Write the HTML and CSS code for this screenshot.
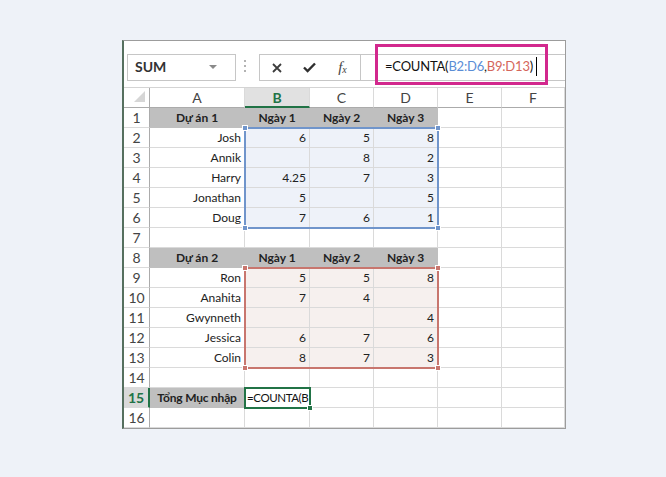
FILE: index.html
```html
<!DOCTYPE html>
<html lang="vi">
<head>
    <meta charset="UTF-8">
    <meta name="viewport" content="width=device-width, initial-scale=1.0">
    <title>COUNTA</title>
    <link rel="stylesheet" href="styles.css">
</head>
<body>
    <div class="window">
        <div class="formula-bar">
            <div class="name-box">SUM<span class="arrow"></span></div>
            <div class="grip"></div>
            <div class="fx-buttons">
                <div class="fx-btn">
                    <svg width="10" height="10" viewBox="0 0 10 10"><path d="M1 1L9 9M9 1L1 9" stroke="#3c3c3c" stroke-width="1.8" fill="none"/></svg>
                </div>
                <div class="fx-btn">
                    <svg width="13" height="11" viewBox="0 0 13 11"><path d="M1 5.5L4.6 9L12 1.5" stroke="#2f2f2f" stroke-width="2.4" fill="none"/></svg>
                </div>
                <div class="fx-btn"><span class="fx">f<sub>x</sub></span></div>
            </div>
            <div class="fx-input">
                <span class="callout"></span>
                =COUNTA(<span class="ref-blue">B2:D6</span>,<span class="ref-red">B9:D13</span>)<span class="caret"></span>
            </div>
        </div>

        <div class="sheet-wrap">
            <div class="sheet cells">
                <div class="corner"></div><div class="ch">A</div><div class="ch sel">B</div><div class="ch">C</div><div class="ch">D</div><div class="ch">E</div><div class="ch">F</div>

                <div class="rh">1</div><div class="c g">Dự án 1</div><div class="c g">Ngày 1</div><div class="c g">Ngày 2</div><div class="c g">Ngày 3</div><div class="c"></div><div class="c"></div>
                <div class="rh">2</div><div class="c">Josh</div><div class="c sb">6</div><div class="c sb">5</div><div class="c sb">8</div><div class="c"></div><div class="c"></div>
                <div class="rh">3</div><div class="c">Annik</div><div class="c sb"></div><div class="c sb">8</div><div class="c sb">2</div><div class="c"></div><div class="c"></div>
                <div class="rh">4</div><div class="c">Harry</div><div class="c sb">4.25</div><div class="c sb">7</div><div class="c sb">3</div><div class="c"></div><div class="c"></div>
                <div class="rh">5</div><div class="c">Jonathan</div><div class="c sb">5</div><div class="c sb"></div><div class="c sb">5</div><div class="c"></div><div class="c"></div>
                <div class="rh">6</div><div class="c">Doug</div><div class="c sb">7</div><div class="c sb">6</div><div class="c sb">1</div><div class="c"></div><div class="c"></div>
                <div class="rh">7</div><div class="c"></div><div class="c"></div><div class="c"></div><div class="c"></div><div class="c"></div><div class="c"></div>
                <div class="rh">8</div><div class="c g">Dự án 2</div><div class="c g">Ngày 1</div><div class="c g">Ngày 2</div><div class="c g">Ngày 3</div><div class="c"></div><div class="c"></div>
                <div class="rh">9</div><div class="c">Ron</div><div class="c sr">5</div><div class="c sr">5</div><div class="c sr">8</div><div class="c"></div><div class="c"></div>
                <div class="rh">10</div><div class="c">Anahita</div><div class="c sr">7</div><div class="c sr">4</div><div class="c sr"></div><div class="c"></div><div class="c"></div>
                <div class="rh">11</div><div class="c">Gwynneth</div><div class="c sr"></div><div class="c sr"></div><div class="c sr">4</div><div class="c"></div><div class="c"></div>
                <div class="rh">12</div><div class="c">Jessica</div><div class="c sr">6</div><div class="c sr">7</div><div class="c sr">6</div><div class="c"></div><div class="c"></div>
                <div class="rh">13</div><div class="c">Colin</div><div class="c sr">8</div><div class="c sr">7</div><div class="c sr">3</div><div class="c"></div><div class="c"></div>
                <div class="rh">14</div><div class="c"></div><div class="c"></div><div class="c"></div><div class="c"></div><div class="c"></div><div class="c"></div>
                <div class="rh sel">15</div><div class="c g total">Tổng Mục nhập</div><div class="c left">=COUNTA(B</div><div class="c"></div><div class="c"></div><div class="c"></div><div class="c"></div>
                <div class="rh">16</div><div class="c"></div><div class="c"></div><div class="c"></div><div class="c"></div><div class="c"></div><div class="c"></div>
            </div>

            <!-- range outlines, drawn on a second grid stacked over the cells -->
            <div class="sheet marks">
                <div class="range range-blue"><i class="tl"></i><i class="tr"></i><i class="bl"></i><i class="br"></i></div>
                <div class="range range-red"><i class="tl"></i><i class="tr"></i><i class="bl"></i><i class="br"></i></div>
                <div class="active"><i class="br"></i></div>
            </div>
        </div>
    </div>
</body>
</html>
```

FILE: styles.css
```css
* {
    margin: 0;
    padding: 0;
    box-sizing: border-box;
}

body {
    background: #eef2f8;
    font-family: Lato, "Open Sans", sans-serif;
    color: #222;
}

.window {
    margin: 40px 0 0 122px;
    width: 444px;
    background: #fff;
    border: 1px solid #9c9c9c;
    border-left: 2px solid #56705f;
}

/* formula bar */
.formula-bar {
    display: flex;
    align-items: flex-start;
    height: 47px;
    padding-top: 13px;
    border-bottom: 1px solid #d4d4d4;
}

.name-box {
    margin-left: 3px;
    width: 109px;
    height: 27px;
    border: 1px solid #c6c6c6;
    display: flex;
    align-items: center;
    justify-content: space-between;
    padding: 0 18px 3px 7px;
    font-size: 14px;
    font-weight: 700;
    color: #333;
}

.arrow {
    margin-top: 2px;
    border-left: 4px solid transparent;
    border-right: 4px solid transparent;
    border-top: 4px solid #8a8a8a;
}

.grip {
    margin: 6px 0 0 8px;
    width: 2px;
    height: 14px;
    background: linear-gradient(#b3b3b3 2px, transparent 2px) 0 0 / 2px 5px repeat-y;
}

.fx-buttons {
    margin-left: 13px;
    width: 102px;
    height: 27px;
    border: 1px solid #c6c6c6;
    display: flex;
}

.fx-btn {
    width: 33px;
    display: flex;
    align-items: center;
    justify-content: center;
}

.fx {
    font-family: "Liberation Serif", serif;
    font-style: italic;
    font-size: 15px;
    color: #444;
}

.fx sub {
    font-size: 10px;
    vertical-align: -1px;
}

.fx-input {
    position: relative;
    flex: 1;
    height: 27px;
    margin-left: -1px;
    border: 1px solid #c6c6c6;
    border-right: none;
    padding-left: 24px;
    font-size: 13px;
    letter-spacing: -0.2px;
    line-height: 23px;
    color: #111;
    white-space: nowrap;
}

.ref-blue { color: #5a8dd6; }
.ref-red { color: #d5665b; }

.caret {
    display: inline-block;
    width: 1px;
    height: 19px;
    margin-left: 3px;
    vertical-align: -5px;
    background: #000;
}

.callout {
    position: absolute;
    left: 14px;
    top: -11px;
    width: 173px;
    height: 41px;
    border: 3px solid #d2288d;
}

/* grid */
.sheet-wrap {
    display: grid;
}

.sheet {
    grid-area: 1 / 1;
    display: grid;
    grid-template-columns: 26px 95px 65px 64px 64px 64px 63px;
    grid-template-rows: repeat(17, 20px);
    font-size: 12px;
}

.cells > div {
    border-right: 1px solid #dadada;
    border-bottom: 1px solid #dadada;
    line-height: 20px;
    white-space: nowrap;
    overflow: hidden;
}

.corner {
    display: flex;
    align-items: flex-end;
    justify-content: flex-end;
    padding: 0 4px 5px 0;
    border-color: #ababab !important;
}

.corner::after {
    content: "";
    border-style: solid;
    border-width: 0 0 11px 11px;
    border-color: transparent transparent #d6d6d6 transparent;
}

.ch {
    text-align: center;
    font-size: 14px;
    color: #444;
    border-bottom-color: #ababab !important;
}

.ch.sel {
    background: #e1e1e1;
    color: #217346;
    font-weight: 700;
    border-bottom: 2px solid #217346 !important;
}

.rh {
    text-align: center;
    font-size: 14px;
    color: #444;
    border-right-color: #ababab !important;
}

.rh.sel {
    background: #d9d9d9;
    color: #217346;
    font-weight: 700;
    border-right: 2px solid #217346 !important;
}

.c {
    text-align: right;
    padding: 0 3px;
}

.c.left {
    text-align: left;
    padding: 0 0 0 2px;
    letter-spacing: -0.4px;
    font-size: 11.5px;
    color: #111;
}

.g {
    background: #bfbfbf;
    border-color: #bfbfbf !important;
    font-weight: 700;
    text-align: center;
}

.total {
    letter-spacing: -0.2px;
}

.sb { background: #eef2f9; }
.sr { background: #f6f0ee; }

/* overlays */
.marks {
    pointer-events: none;
}

.range,
.active {
    position: relative;
    margin: -1px;
}

.range-blue {
    grid-row: 3 / 8;
    grid-column: 3 / 6;
    border: 2px solid #7095cb;
}

.range-red {
    grid-row: 10 / 15;
    grid-column: 3 / 6;
    border: 2px solid #c8766e;
}

.active {
    grid-row: 16 / 17;
    grid-column: 3 / 4;
    border: 2px solid #217346;
}

.range i,
.active i {
    position: absolute;
    width: 6px;
    height: 6px;
    border: 1px solid #fff;
}

.range-blue i { background: #7095cb; }
.range-red i { background: #c8766e; }
.active i { background: #217346; }

.tl { left: -4px; top: -4px; }
.tr { right: -4px; top: -4px; }
.bl { left: -4px; bottom: -4px; }
.br { right: -4px; bottom: -4px; }
```
